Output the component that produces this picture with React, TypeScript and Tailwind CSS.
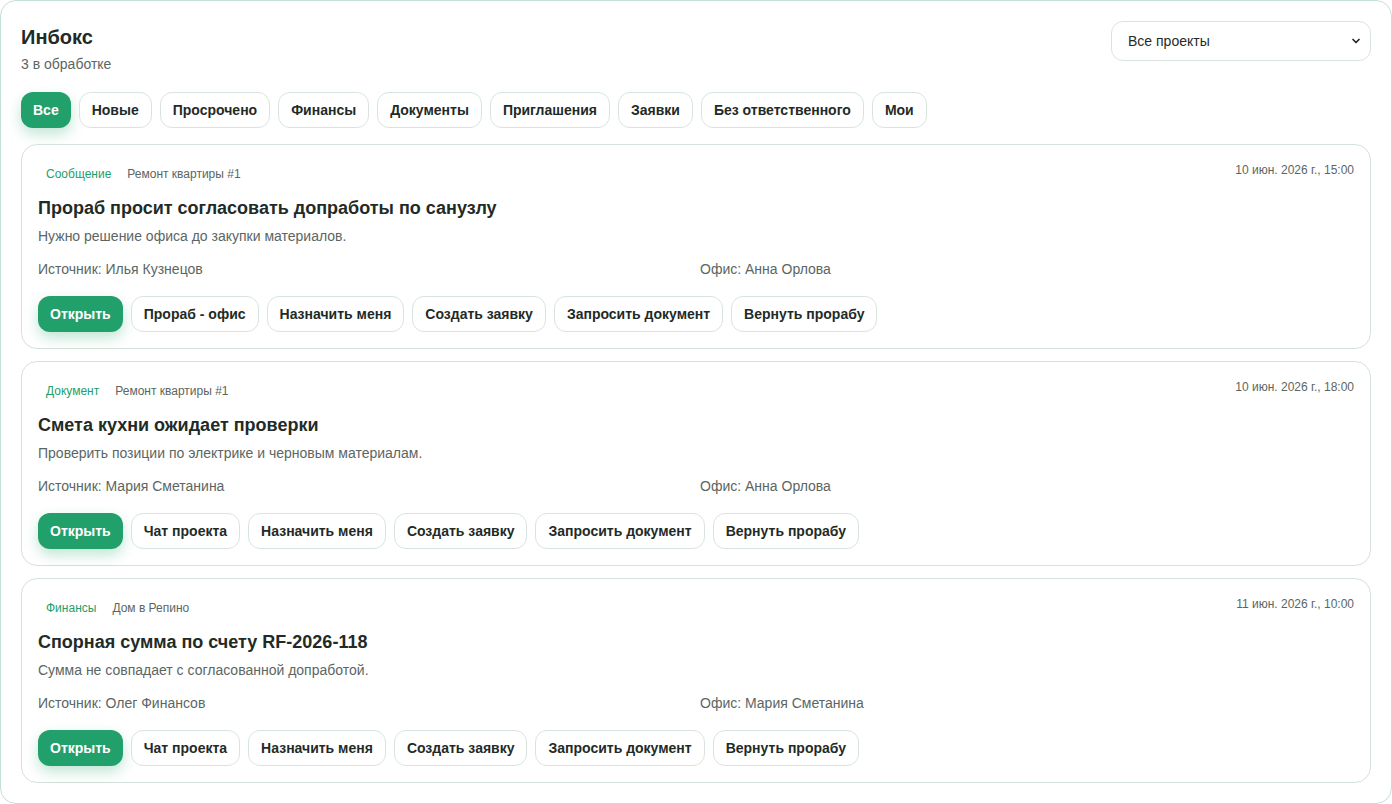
import { ChevronDown } from "lucide-react";

type Item = { kind: string; project: string; date: string; title: string; desc: string; source: string; office: string; route: string };

const filters = ["Все", "Новые", "Просрочено", "Финансы", "Документы", "Приглашения", "Заявки", "Без ответственного", "Мои"];

const items: Item[] = [
  { kind: "Сообщение", project: "Ремонт квартиры #1", date: "10 июн. 2026 г., 15:00", title: "Прораб просит согласовать допработы по санузлу", desc: "Нужно решение офиса до закупки материалов.", source: "Илья Кузнецов", office: "Анна Орлова", route: "Прораб - офис" },
  { kind: "Документ", project: "Ремонт квартиры #1", date: "10 июн. 2026 г., 18:00", title: "Смета кухни ожидает проверки", desc: "Проверить позиции по электрике и черновым материалам.", source: "Мария Сметанина", office: "Анна Орлова", route: "Чат проекта" },
  { kind: "Финансы", project: "Дом в Репино", date: "11 июн. 2026 г., 10:00", title: "Спорная сумма по счету RF-2026-118", desc: "Сумма не совпадает с согласованной допработой.", source: "Олег Финансов", office: "Мария Сметанина", route: "Чат проекта" },
];

const ghost = "h-9 px-3 rounded-xl border border-[#d9e4df] bg-white text-sm font-bold text-[#1f2b27]";
const green = "h-9 px-3 rounded-xl bg-[#22a06b] text-sm font-bold text-white shadow-[0_6px_14px_rgba(34,160,107,0.28)]";

function Card({ it }: { it: Item }) {
  return (
    <div className="rounded-2xl border border-[#d6e1dc] bg-white px-4 pt-[17px] pb-4">
      <div className="flex items-start justify-between">
        <div className="flex items-center text-xs leading-6">
          <span className="px-2 text-[#22a06b]">{it.kind}</span>
          <span className="px-2 text-[#5b6663]">{it.project}</span>
        </div>
        <span className="text-xs leading-4 text-[#5b6663]">{it.date}</span>
      </div>
      <h2 className="mt-2 text-lg leading-7 font-bold text-[#1f2b27]">{it.title}</h2>
      <p className="mt-1 text-sm leading-5 text-[#5b6663]">{it.desc}</p>
      <div className="mt-[13px] grid grid-cols-2 gap-2 text-sm leading-5 text-[#5b6663]">
        <span>Источник: {it.source}</span>
        <span>Офис: {it.office}</span>
      </div>
      <div className="mt-[17px] flex gap-2">
        <button className={green}>Открыть</button>
        <button className={ghost}>{it.route}</button>
        <button className={ghost}>Назначить меня</button>
        <button className={ghost}>Создать заявку</button>
        <button className={ghost}>Запросить документ</button>
        <button className={ghost}>Вернуть прорабу</button>
      </div>
    </div>
  );
}

export default function App() {
  return (
    <div className="h-[804px] bg-white font-['Liberation_Sans',Arial,sans-serif]">
      <div className="h-[804px] rounded-2xl border border-[#c4e0d2] bg-white px-5 pt-5">
        <div className="flex items-start justify-between">
          <div>
            <h1 className="text-xl leading-8 font-bold text-[#1f2b27]">Инбокс</h1>
            <p className="mt-[1px] text-sm leading-5 text-[#5b6663]">3 в обработке</p>
          </div>
          <div className="w-[260px]">
            <div className="h-10 rounded-xl border border-[#d9e4df] bg-white pl-4 pr-2 flex items-center justify-between text-sm text-[#1f2b27]">
              <span>Все проекты</span>
              <ChevronDown size={12} strokeWidth={3.5} />
            </div>
          </div>
        </div>
        <div className="mt-[18px] flex gap-2">
          {filters.map((f, i) => (
            <button key={f} className={i === 0 ? green : ghost}>{f}</button>
          ))}
        </div>
        <div className="mt-4 flex flex-col gap-3">
          {items.map((it) => <Card key={it.title} it={it} />)}
        </div>
      </div>
    </div>
  );
}
